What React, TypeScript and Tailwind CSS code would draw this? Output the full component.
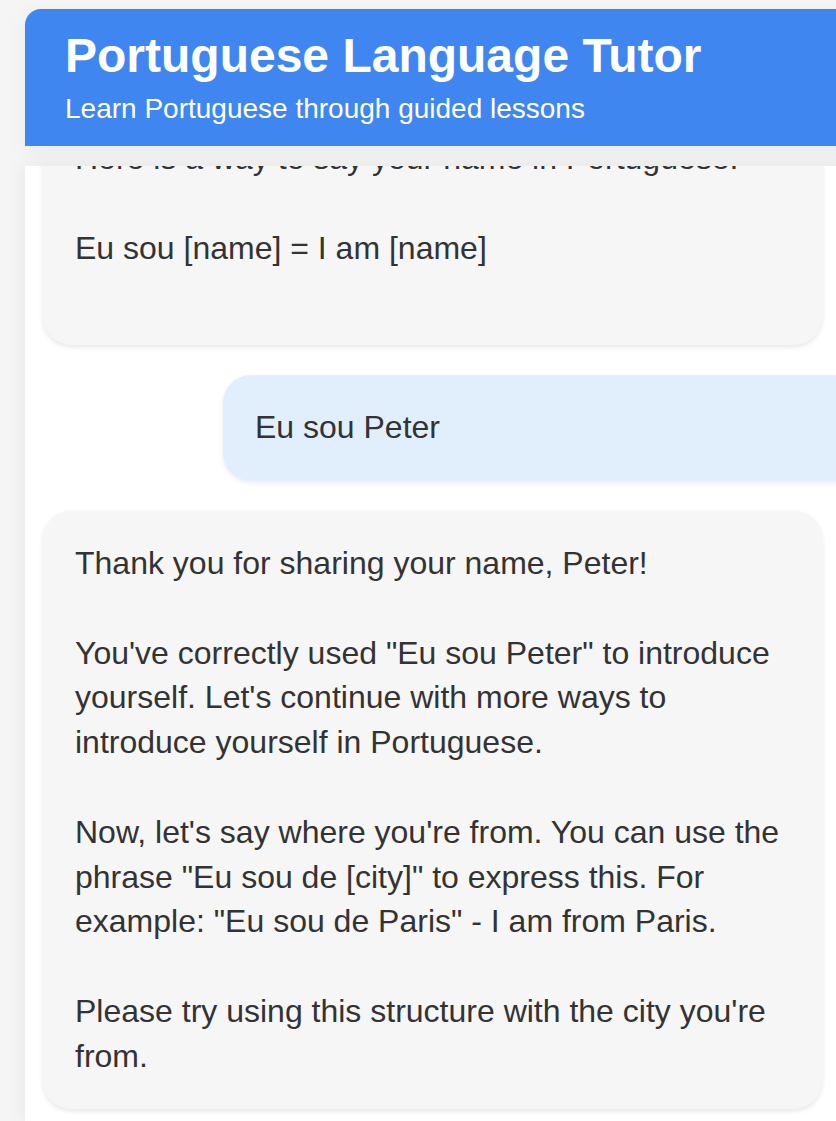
import React from 'react';

type Message = {
  from: 'tutor' | 'user';
  lines: string[];
};

const messages: Message[] = [
  {
    from: 'tutor',
    lines: ['Here is a way to say your name in Portuguese.', '', 'Eu sou [name] = I am [name]', ''],
  },
  { from: 'user', lines: ['Eu sou Peter'] },
  {
    from: 'tutor',
    lines: [
      'Thank you for sharing your name, Peter!',
      '',
      'You\'ve correctly used "Eu sou Peter" to introduce yourself. Let\'s continue with more ways to introduce yourself in Portuguese.',
      '',
      'Now, let\'s say where you\'re from. You can use the phrase "Eu sou de [city]" to express this. For example: "Eu sou de Paris" - I am from Paris.',
      '',
      "Please try using this structure with the city you're from.",
    ],
  },
];

const Bubble: React.FC<{ message: Message; first?: boolean }> = ({ message, first }) => {
  const isUser = message.from === 'user';
  return (
    <div
      className={
        isUser
          ? 'ml-[180px] rounded-[28px] bg-[#e1effd] px-8 pb-[31px] pt-[30px] shadow-[0_2px_5px_rgba(0,0,0,0.08)]'
          : first
            ? 'mt-[-60px] mr-[185px] rounded-[28px] bg-[#f6f6f6] px-8 py-[30px] shadow-[0_2px_5px_rgba(0,0,0,0.1)]'
            : 'mr-[185px] rounded-[28px] bg-[#f6f6f6] px-8 py-[30px] shadow-[0_2px_5px_rgba(0,0,0,0.1)]'
      }
    >
      {message.lines.map((line, i) => (
        <div key={i}>{line || '\u00a0'}</div>
      ))}
    </div>
  );
};

export default function App() {
  return (
    <div className="h-[1121px] w-[836px] overflow-hidden bg-[#f5f5f5] pl-[25px] pt-[9px] font-['Liberation_Sans',Arial,sans-serif] text-[#333]">
      <div className="flex h-full w-[1000px] flex-col">
        {/* Header */}
        <header className="relative z-10 rounded-tl-2xl bg-[#4086f0] px-10 pb-[18px] pt-[18px] text-white shadow-[0_4px_20px_rgba(0,0,0,0.05)]">
          <h1 className="text-[48px] font-bold leading-[58px]">Portuguese Language Tutor</h1>
          <p className="mt-[4px] text-[28px] leading-[39px]">Learn Portuguese through guided lessons</p>
        </header>

        {/* Chat */}
        <main className="mt-5 flex flex-1 flex-col gap-[30px] overflow-hidden bg-white px-[18px] text-[32px] leading-[1.4] shadow-[0_0_20px_rgba(0,0,0,0.07)]">
          {messages.map((m, i) => (
            <Bubble key={i} message={m} first={i === 0} />
          ))}
        </main>
      </div>
    </div>
  );
}
